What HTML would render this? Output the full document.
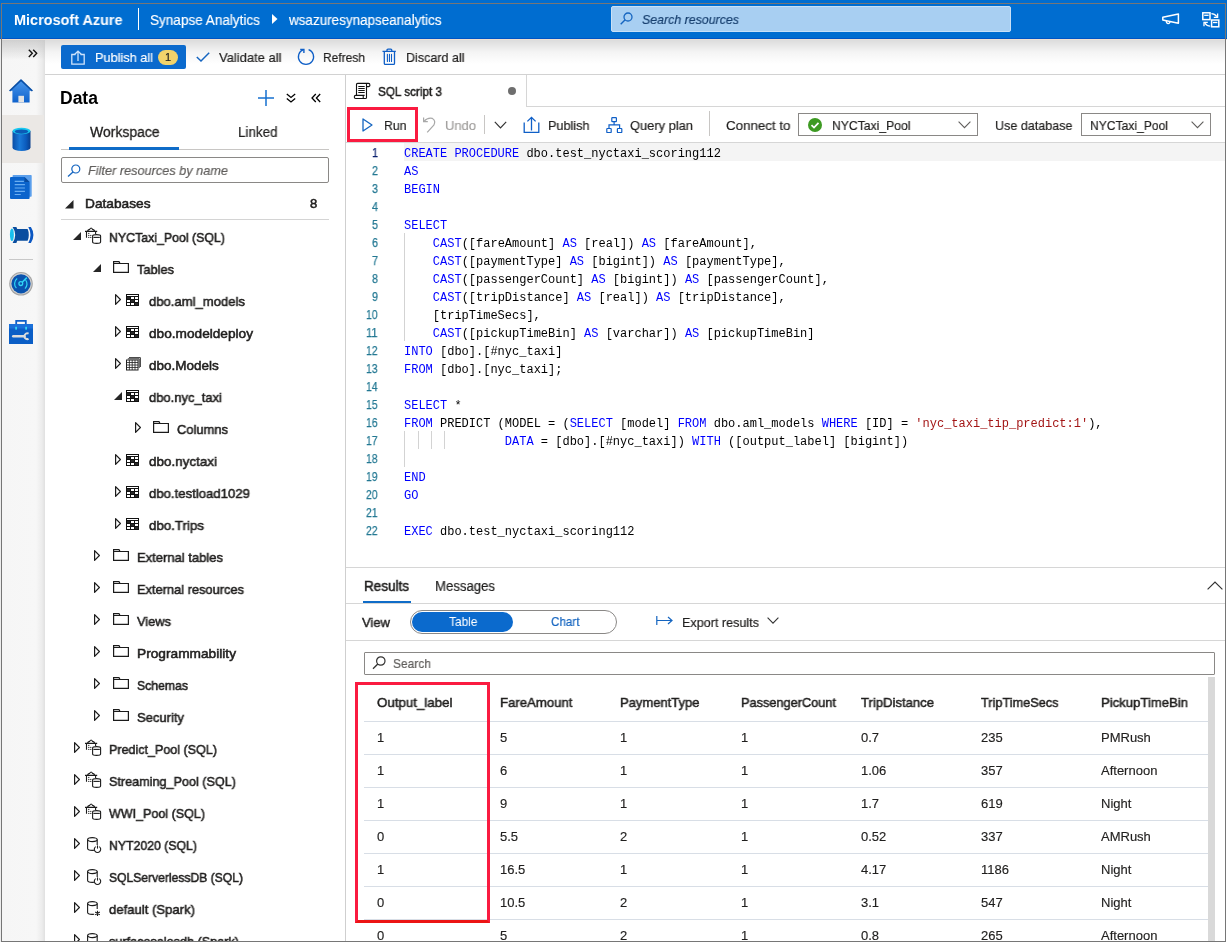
<!DOCTYPE html>
<html><head><meta charset="utf-8">
<style>
*{box-sizing:border-box;margin:0;padding:0}
html,body{width:1227px;height:942px;overflow:hidden;background:#fff}
body{position:relative;font-family:"Liberation Sans",sans-serif;color:#201f1e;font-size:13px}
.a{position:absolute;white-space:pre}
svg.a{overflow:visible}
body{-webkit-font-smoothing:antialiased}
div.a{will-change:transform}
</style></head><body>

<div class="a" style="left:0px;top:0px;width:1227px;height:39px;background:#006dd0"></div>
<div class="a" style="left:0px;top:38px;width:1227px;height:1px;background:#0054c4"></div>
<div class="a" style="left:0px;top:39px;width:1227px;height:1px;background:#f0e0d0;z-index:3"></div>
<div class="a" style="left:138px;top:8px;width:1px;height:22px;background:#fff"></div>
<svg class="a" style="left:272px;top:14px;z-index:6" width="6" height="10" viewBox="0 0 6 10"><path d="M0 0L5.5 5L0 10Z" fill="#fff"/></svg>
<div class="a" style="left:611px;top:6px;width:400px;height:26px;background:#a8cff2;border-radius:2px;border:1px solid #c9e0f6"></div>
<svg class="a" style="left:620px;top:12px;z-index:6" width="13" height="13" viewBox="0 0 13 13"><circle cx="8" cy="5" r="4" fill="none" stroke="#1565c0" stroke-width="1.3"/><path d="M5.2 7.8L0.7 12.3" stroke="#1565c0" stroke-width="1.4"/></svg>
<svg class="a" style="left:1162px;top:13px;z-index:6" width="18" height="12" viewBox="0 0 18 12"><path d="M0.8 4.2L16.4 0.9V10.3L0.8 7.1Z" fill="none" stroke="#fff" stroke-width="1.5" stroke-linejoin="round"/><path d="M4.3 7.8Q4.3 10.6 6.1 10.6Q7.9 10.6 7.9 8.6" fill="none" stroke="#fff" stroke-width="1.3"/></svg>
<svg class="a" style="left:1202px;top:11.5px;z-index:6" width="18" height="16" viewBox="0 0 18 16"><rect x="0.8" y="0.8" width="7.2" height="6.8" fill="none" stroke="#fff" stroke-width="1.5"/><path d="M2.2 3.3H6.6" stroke="#fff" stroke-width="1.3"/><rect x="9.6" y="8" width="7.2" height="6.8" fill="none" stroke="#fff" stroke-width="1.5"/><path d="M11 10.5H15.4" stroke="#fff" stroke-width="1.3"/><path d="M9.4 1.6Q12.6 1.6 14.8 4.6" fill="none" stroke="#fff" stroke-width="1.3"/><path d="M15.6 1.6V5.4H11.8" fill="none" stroke="#fff" stroke-width="1.3"/><path d="M8.2 14.2Q5 14.2 2.8 11.2" fill="none" stroke="#fff" stroke-width="1.3"/><path d="M2 14.2V10.4H5.8" fill="none" stroke="#fff" stroke-width="1.3"/></svg>
<div class="a" style="left:2px;top:40px;width:43px;height:902px;background:linear-gradient(to right,#f6f6f6 0,#f7f7f7 34px,#ececec 40px,#e0e0e0 43px)"></div>
<div class="a" style="left:2px;top:115px;width:42px;height:48px;background:#ebe8e5"></div>
<div class="a" style="left:2px;top:40px;width:43px;height:20px;background:linear-gradient(rgba(198,198,198,0.8),rgba(245,245,245,0))"></div>
<svg class="a" style="left:28px;top:48.5px;z-index:6" width="10" height="9" viewBox="0 0 10 9"><path d="M0.8 0.7L4.3 4.3L0.8 7.9M5.2 0.7L8.7 4.3L5.2 7.9" fill="none" stroke="#111" stroke-width="1.4"/></svg>
<svg class="a" style="left:9px;top:79px;z-index:6" width="24" height="24" viewBox="0 0 24 24"><defs><linearGradient id="hg" x1="0" y1="0" x2="0" y2="1"><stop offset="0" stop-color="#4b98ec"/><stop offset="1" stop-color="#0f62cc"/></linearGradient></defs><path d="M12 1L23.5 11.8H20.6V23.4H3.4V11.8H0.5Z" fill="url(#hg)"/><path d="M0.6 12L12 1.2L23.4 12" fill="none" stroke="#0a4fa6" stroke-width="1.7" stroke-linejoin="round"/><rect x="9.4" y="16.8" width="5.6" height="6.6" fill="#e3e3e3"/></svg>
<svg class="a" style="left:11.5px;top:127px;z-index:6" width="19" height="25" viewBox="0 0 19 25"><defs><linearGradient id="cg" x1="0" y1="0" x2="1" y2="0"><stop offset="0" stop-color="#0a4ea6"/><stop offset="0.4" stop-color="#1a7ad9"/><stop offset="0.75" stop-color="#0b5bbd"/><stop offset="1" stop-color="#093f8e"/></linearGradient></defs><path d="M0.5 4V20.5A9 3.6 0 0 0 18.5 20.5V4Z" fill="url(#cg)"/><ellipse cx="9.5" cy="4" rx="9" ry="3.3" fill="#18c8f0"/><ellipse cx="9.5" cy="4.6" rx="6.8" ry="2.1" fill="#0b5ab6"/></svg>
<svg class="a" style="left:10px;top:175px;z-index:6" width="22" height="24" viewBox="0 0 22 24"><rect x="2.6" y="0" width="19.1" height="21.8" rx="0.8" fill="#5b9fec"/><path d="M0 3.1Q0 2.1 1 2.1H14.5L19.6 7V23Q19.6 24 18.6 24H1Q0 24 0 23Z" fill="#0b64cc"/><path d="M14.5 2.1V7H19.6Z" fill="#0a4c9e"/><path d="M4.7 6.4H13.9M4.7 9.6H14.9M4.7 13H14.9M4.7 16.4H14.9M4.7 19.5H10.8" stroke="#6aaef2" stroke-width="1.2"/></svg>
<svg class="a" style="left:9px;top:226px;z-index:6" width="25" height="18" viewBox="0 0 25 18"><ellipse cx="2.9" cy="8.8" rx="2" ry="6.3" fill="#17c0ee"/><path d="M3.6 0.9H7.4L8.2 3H18.6Q19.8 5.5 19.8 8.9Q19.8 12.3 18.6 14.8H8.2L7.4 16.9H3.6Q6.2 13 6.2 8.9Q6.2 4.8 3.6 0.9Z" fill="#0a4e9f"/><path d="M19.3 0.9H21.9Q24.4 4.6 24.4 8.9Q24.4 13.2 21.9 16.9H19.3Q21.5 13 21.5 8.9Q21.5 4.8 19.3 0.9Z" fill="#0b57c2"/></svg>
<div class="a" style="left:9px;top:259px;width:24px;height:1px;background:#c8c8c8"></div>
<svg class="a" style="left:9px;top:272px;z-index:6" width="24" height="24" viewBox="0 0 24 24"><circle cx="12" cy="11.8" r="11.8" fill="#a3a3a3"/><circle cx="12" cy="11.8" r="10.7" fill="#cfcfcf"/><circle cx="12" cy="11.8" r="9.6" fill="#0a53ae"/><path d="M7.4 16.2A6.4 6.4 0 0 1 8.2 6.6" fill="none" stroke="#2fd6f5" stroke-width="1.2"/><path d="M16.6 8A6.4 6.4 0 0 1 16 16.6" fill="none" stroke="#2fd6f5" stroke-width="1.2"/><circle cx="11.8" cy="11.6" r="1.9" fill="none" stroke="#2fd6f5" stroke-width="1.3"/><path d="M13.2 10.2L17.8 5.6" stroke="#2fd6f5" stroke-width="1.5"/></svg>
<svg class="a" style="left:9px;top:319px;z-index:6" width="24" height="25" viewBox="0 0 24 25"><path d="M7.2 5V1.8H16.8V5" fill="none" stroke="#0e5fc8" stroke-width="1.8"/><rect x="0" y="5" width="24" height="20" fill="#0b5ec6"/><rect x="0" y="5" width="24" height="4.5" fill="#1a70d9"/><rect x="6.2" y="7.8" width="1.8" height="2.8" fill="#35d4f3"/><rect x="16.2" y="7.8" width="1.8" height="2.8" fill="#35d4f3"/><path d="M4.2 17.2H15.5" stroke="#dcdcdc" stroke-width="2.4" stroke-linecap="round"/><path d="M19.6 14.6A2.9 2.9 0 1 0 19.6 19.8" fill="none" stroke="#dcdcdc" stroke-width="2"/></svg>
<div class="a" style="left:45px;top:40px;width:1180px;height:35px;background:linear-gradient(#dcdcdc 0,#f4f4f4 12px,#fff 24px)"></div>
<div class="a" style="left:45px;top:74px;width:1180px;height:1px;background:#d2d2d2"></div>
<div class="a" style="left:61px;top:45px;width:125px;height:24px;background:#0b6acd;border-radius:2px"></div>
<svg class="a" style="left:71px;top:50px;z-index:6" width="14" height="15" viewBox="0 0 14 15"><path d="M4.5 4.5H0.8V14.2H13.2V4.5H9.5" fill="none" stroke="#cfe3fb" stroke-width="1.3"/><path d="M7 11V1.2M3.8 4.3L7 1.1L10.2 4.3" fill="none" stroke="#cfe3fb" stroke-width="1.3"/></svg>
<div class="a" style="left:158px;top:50px;width:19.5px;height:15px;border-radius:8px;background:#f2d36b"></div>
<svg class="a" style="left:196px;top:52px;z-index:6" width="14" height="10" viewBox="0 0 14 10"><path d="M0.8 5L5 9L13.2 0.8" fill="none" stroke="#1565c0" stroke-width="1.5"/></svg>
<svg class="a" style="left:297px;top:48px;z-index:6" width="18" height="18" viewBox="0 0 18 18"><path d="M11.6 1.7A7.6 7.6 0 1 1 6.4 1.7" fill="none" stroke="#0f5fc7" stroke-width="1.3"/><path d="M3.2 1.4H6.9V5.1" fill="none" stroke="#0f5fc7" stroke-width="1.4"/></svg>
<svg class="a" style="left:382px;top:48px;z-index:6" width="15" height="18" viewBox="0 0 15 18"><path d="M0.5 3.4H13.8M5 3.4V2.3Q5 1.2 6 1.2H8.8Q9.8 1.2 9.8 2.3V3.4M2.3 3.8V15.4Q2.3 16.4 3.3 16.4H11.5Q12.5 16.4 12.5 15.4V3.8" fill="none" stroke="#0f5fc7" stroke-width="1.3"/><path d="M5.4 6.4V13.5M7.45 6.4V13.5M9.5 6.4V13.5" stroke="#0f5fc7" stroke-width="1.1" stroke-linecap="round"/></svg>
<div class="a" style="left:345px;top:75px;width:1px;height:867px;background:#cfcfcf"></div>
<svg class="a" style="left:258px;top:90px;z-index:6" width="16" height="16" viewBox="0 0 16 16"><path d="M8 0V16M0 8H16" stroke="#1670d0" stroke-width="1.5"/></svg>
<svg class="a" style="left:286px;top:93px;z-index:6" width="10" height="10" viewBox="0 0 10 10"><path d="M0.8 1L5 4.5L9.2 1M0.8 5.5L5 9L9.2 5.5" fill="none" stroke="#000" stroke-width="1.3"/></svg>
<svg class="a" style="left:311px;top:93px;z-index:6" width="10" height="10" viewBox="0 0 10 10"><path d="M4.8 1L1 5L4.8 9M9.2 1L5.4 5L9.2 9" fill="none" stroke="#000" stroke-width="1.3"/></svg>
<div class="a" style="left:61px;top:149px;width:268px;height:1px;background:#c8c6c4"></div>
<div class="a" style="left:69px;top:147px;width:110px;height:2.5px;background:#0f6cc8"></div>
<div class="a" style="left:61px;top:157px;width:268px;height:26px;border:1px solid #8a8886;border-radius:2px;background:#fff"></div>
<svg class="a" style="left:67px;top:164px;z-index:6" width="14" height="13" viewBox="0 0 14 13"><circle cx="8.8" cy="5" r="4" fill="none" stroke="#1565c0" stroke-width="1.2"/><path d="M6 8L1 12.5" stroke="#1565c0" stroke-width="1.3"/></svg>
<svg class="a" style="left:65px;top:200px;z-index:6" width="8.5" height="8.5" viewBox="0 0 8.5 8.5"><path d="M8.5 0V8.5H0Z" fill="#262626"/></svg>
<div class="a" style="left:61px;top:219px;width:268px;height:1px;background:#d4d4d4"></div>
<svg class="a" style="left:73px;top:232px;z-index:6" width="8" height="8" viewBox="0 0 8 8"><path d="M8 0V8H0Z" fill="#262626"/></svg>
<svg class="a" style="left:85px;top:227px;z-index:6" width="16" height="17" viewBox="0 0 16 17"><path d="M0 4.4H12.2M2.2 4.4Q3 2.6 4.6 2.4Q5.6 1 6.1 1Q6.6 1 7.6 2.4Q9.2 2.6 10 4.4" fill="none" stroke="#1b1b1b" stroke-width="1.1"/><path d="M1.5 4.4V10.8M10.6 4.4V7" stroke="#1b1b1b" stroke-width="1.1"/><circle cx="3.8" cy="6.4" r="0.6" fill="#1b1b1b"/><circle cx="3.8" cy="8.4" r="0.6" fill="#1b1b1b"/><circle cx="5.8" cy="8.4" r="0.6" fill="#1b1b1b"/><circle cx="3.8" cy="10.4" r="0.6" fill="#1b1b1b"/><circle cx="5.8" cy="10.4" r="0.6" fill="#1b1b1b"/><path d="M7.6 9Q7.6 7.6 11.6 7.6Q15.6 7.6 15.6 9V15Q15.6 16.4 11.6 16.4Q7.6 16.4 7.6 15Z" fill="#fff" stroke="#1b1b1b" stroke-width="1.1"/><path d="M8.4 10.4H14.8" stroke="#1b1b1b" stroke-width="1.1"/></svg>
<svg class="a" style="left:93px;top:264px;z-index:6" width="8" height="8" viewBox="0 0 8 8"><path d="M8 0V8H0Z" fill="#262626"/></svg>
<svg class="a" style="left:113px;top:261px;z-index:6" width="16" height="12" viewBox="0 0 16 12"><path d="M0.6 11.4V0.6H6L7 2.5H15.4V11.4Z M0.6 2.5H7" fill="none" stroke="#1b1b1b" stroke-width="1.2"/></svg>
<svg class="a" style="left:114.8px;top:294px;z-index:6" width="6" height="12" viewBox="0 0 6 12"><path d="M0.6 0.7L5.4 5.5L0.6 10.3Z" fill="none" stroke="#1b1b1b" stroke-width="1.2" stroke-linejoin="round"/></svg>
<svg class="a" style="left:126px;top:294px;z-index:6" width="13" height="12" viewBox="0 0 13 12" shape-rendering="crispEdges"><rect x="0" y="0" width="13" height="12" fill="#111"/><rect x="1" y="1" width="11" height="1" fill="#fff"/><rect x="1" y="3" width="3" height="2" fill="#2a2a2a"/><rect x="5" y="3" width="3" height="2" fill="#fff" rx="0.4"/><rect x="9" y="3" width="3" height="2" fill="#fff" rx="0.4"/><rect x="1" y="6" width="3" height="2" fill="#fff" rx="0.4"/><rect x="5" y="6" width="3" height="2" fill="#2a2a2a"/><rect x="9" y="6" width="3" height="2" fill="#fff" rx="0.4"/><rect x="1" y="9" width="3" height="2" fill="#fff" rx="0.4"/><rect x="5" y="9" width="3" height="2" fill="#fff" rx="0.4"/><rect x="9" y="9" width="3" height="2" fill="#2a2a2a"/></svg>
<svg class="a" style="left:114.8px;top:326px;z-index:6" width="6" height="12" viewBox="0 0 6 12"><path d="M0.6 0.7L5.4 5.5L0.6 10.3Z" fill="none" stroke="#1b1b1b" stroke-width="1.2" stroke-linejoin="round"/></svg>
<svg class="a" style="left:126px;top:326px;z-index:6" width="13" height="12" viewBox="0 0 13 12" shape-rendering="crispEdges"><rect x="0" y="0" width="13" height="12" fill="#111"/><rect x="1" y="1" width="11" height="1" fill="#fff"/><rect x="1" y="3" width="3" height="2" fill="#2a2a2a"/><rect x="5" y="3" width="3" height="2" fill="#fff" rx="0.4"/><rect x="9" y="3" width="3" height="2" fill="#fff" rx="0.4"/><rect x="1" y="6" width="3" height="2" fill="#fff" rx="0.4"/><rect x="5" y="6" width="3" height="2" fill="#2a2a2a"/><rect x="9" y="6" width="3" height="2" fill="#fff" rx="0.4"/><rect x="1" y="9" width="3" height="2" fill="#fff" rx="0.4"/><rect x="5" y="9" width="3" height="2" fill="#fff" rx="0.4"/><rect x="9" y="9" width="3" height="2" fill="#2a2a2a"/></svg>
<svg class="a" style="left:114.8px;top:358px;z-index:6" width="6" height="12" viewBox="0 0 6 12"><path d="M0.6 0.7L5.4 5.5L0.6 10.3Z" fill="none" stroke="#1b1b1b" stroke-width="1.2" stroke-linejoin="round"/></svg>
<svg class="a" style="left:126px;top:357px;z-index:6" width="15" height="14" viewBox="0 0 15 14"><path d="M3 0.6H14.4V10M1.8 1.8H13.2V11" fill="none" stroke="#222" stroke-width="0.9"/><rect x="0.5" y="3" width="11.5" height="10" fill="#fff" stroke="#222" stroke-width="1"/><path d="M0.5 5.5H12M0.5 8H12M0.5 10.5H12M3.4 3V13M6.2 3V13M9 3V13" stroke="#222" stroke-width="0.8"/></svg>
<svg class="a" style="left:114px;top:392px;z-index:6" width="8" height="8" viewBox="0 0 8 8"><path d="M8 0V8H0Z" fill="#262626"/></svg>
<svg class="a" style="left:126px;top:390px;z-index:6" width="13" height="12" viewBox="0 0 13 12" shape-rendering="crispEdges"><rect x="0" y="0" width="13" height="12" fill="#111"/><rect x="1" y="1" width="11" height="1" fill="#fff"/><rect x="1" y="3" width="3" height="2" fill="#2a2a2a"/><rect x="5" y="3" width="3" height="2" fill="#fff" rx="0.4"/><rect x="9" y="3" width="3" height="2" fill="#fff" rx="0.4"/><rect x="1" y="6" width="3" height="2" fill="#fff" rx="0.4"/><rect x="5" y="6" width="3" height="2" fill="#2a2a2a"/><rect x="9" y="6" width="3" height="2" fill="#fff" rx="0.4"/><rect x="1" y="9" width="3" height="2" fill="#fff" rx="0.4"/><rect x="5" y="9" width="3" height="2" fill="#fff" rx="0.4"/><rect x="9" y="9" width="3" height="2" fill="#2a2a2a"/></svg>
<svg class="a" style="left:134.8px;top:422px;z-index:6" width="6" height="12" viewBox="0 0 6 12"><path d="M0.6 0.7L5.4 5.5L0.6 10.3Z" fill="none" stroke="#1b1b1b" stroke-width="1.2" stroke-linejoin="round"/></svg>
<svg class="a" style="left:153px;top:421px;z-index:6" width="16" height="12" viewBox="0 0 16 12"><path d="M0.6 11.4V0.6H6L7 2.5H15.4V11.4Z M0.6 2.5H7" fill="none" stroke="#1b1b1b" stroke-width="1.2"/></svg>
<svg class="a" style="left:114.8px;top:454px;z-index:6" width="6" height="12" viewBox="0 0 6 12"><path d="M0.6 0.7L5.4 5.5L0.6 10.3Z" fill="none" stroke="#1b1b1b" stroke-width="1.2" stroke-linejoin="round"/></svg>
<svg class="a" style="left:126px;top:454px;z-index:6" width="13" height="12" viewBox="0 0 13 12" shape-rendering="crispEdges"><rect x="0" y="0" width="13" height="12" fill="#111"/><rect x="1" y="1" width="11" height="1" fill="#fff"/><rect x="1" y="3" width="3" height="2" fill="#2a2a2a"/><rect x="5" y="3" width="3" height="2" fill="#fff" rx="0.4"/><rect x="9" y="3" width="3" height="2" fill="#fff" rx="0.4"/><rect x="1" y="6" width="3" height="2" fill="#fff" rx="0.4"/><rect x="5" y="6" width="3" height="2" fill="#2a2a2a"/><rect x="9" y="6" width="3" height="2" fill="#fff" rx="0.4"/><rect x="1" y="9" width="3" height="2" fill="#fff" rx="0.4"/><rect x="5" y="9" width="3" height="2" fill="#fff" rx="0.4"/><rect x="9" y="9" width="3" height="2" fill="#2a2a2a"/></svg>
<svg class="a" style="left:114.8px;top:486px;z-index:6" width="6" height="12" viewBox="0 0 6 12"><path d="M0.6 0.7L5.4 5.5L0.6 10.3Z" fill="none" stroke="#1b1b1b" stroke-width="1.2" stroke-linejoin="round"/></svg>
<svg class="a" style="left:126px;top:486px;z-index:6" width="13" height="12" viewBox="0 0 13 12" shape-rendering="crispEdges"><rect x="0" y="0" width="13" height="12" fill="#111"/><rect x="1" y="1" width="11" height="1" fill="#fff"/><rect x="1" y="3" width="3" height="2" fill="#2a2a2a"/><rect x="5" y="3" width="3" height="2" fill="#fff" rx="0.4"/><rect x="9" y="3" width="3" height="2" fill="#fff" rx="0.4"/><rect x="1" y="6" width="3" height="2" fill="#fff" rx="0.4"/><rect x="5" y="6" width="3" height="2" fill="#2a2a2a"/><rect x="9" y="6" width="3" height="2" fill="#fff" rx="0.4"/><rect x="1" y="9" width="3" height="2" fill="#fff" rx="0.4"/><rect x="5" y="9" width="3" height="2" fill="#fff" rx="0.4"/><rect x="9" y="9" width="3" height="2" fill="#2a2a2a"/></svg>
<svg class="a" style="left:114.8px;top:518px;z-index:6" width="6" height="12" viewBox="0 0 6 12"><path d="M0.6 0.7L5.4 5.5L0.6 10.3Z" fill="none" stroke="#1b1b1b" stroke-width="1.2" stroke-linejoin="round"/></svg>
<svg class="a" style="left:126px;top:518px;z-index:6" width="13" height="12" viewBox="0 0 13 12" shape-rendering="crispEdges"><rect x="0" y="0" width="13" height="12" fill="#111"/><rect x="1" y="1" width="11" height="1" fill="#fff"/><rect x="1" y="3" width="3" height="2" fill="#2a2a2a"/><rect x="5" y="3" width="3" height="2" fill="#fff" rx="0.4"/><rect x="9" y="3" width="3" height="2" fill="#fff" rx="0.4"/><rect x="1" y="6" width="3" height="2" fill="#fff" rx="0.4"/><rect x="5" y="6" width="3" height="2" fill="#2a2a2a"/><rect x="9" y="6" width="3" height="2" fill="#fff" rx="0.4"/><rect x="1" y="9" width="3" height="2" fill="#fff" rx="0.4"/><rect x="5" y="9" width="3" height="2" fill="#fff" rx="0.4"/><rect x="9" y="9" width="3" height="2" fill="#2a2a2a"/></svg>
<svg class="a" style="left:93.8px;top:550px;z-index:6" width="6" height="12" viewBox="0 0 6 12"><path d="M0.6 0.7L5.4 5.5L0.6 10.3Z" fill="none" stroke="#1b1b1b" stroke-width="1.2" stroke-linejoin="round"/></svg>
<svg class="a" style="left:113px;top:549px;z-index:6" width="16" height="12" viewBox="0 0 16 12"><path d="M0.6 11.4V0.6H6L7 2.5H15.4V11.4Z M0.6 2.5H7" fill="none" stroke="#1b1b1b" stroke-width="1.2"/></svg>
<svg class="a" style="left:93.8px;top:582px;z-index:6" width="6" height="12" viewBox="0 0 6 12"><path d="M0.6 0.7L5.4 5.5L0.6 10.3Z" fill="none" stroke="#1b1b1b" stroke-width="1.2" stroke-linejoin="round"/></svg>
<svg class="a" style="left:113px;top:581px;z-index:6" width="16" height="12" viewBox="0 0 16 12"><path d="M0.6 11.4V0.6H6L7 2.5H15.4V11.4Z M0.6 2.5H7" fill="none" stroke="#1b1b1b" stroke-width="1.2"/></svg>
<svg class="a" style="left:93.8px;top:614px;z-index:6" width="6" height="12" viewBox="0 0 6 12"><path d="M0.6 0.7L5.4 5.5L0.6 10.3Z" fill="none" stroke="#1b1b1b" stroke-width="1.2" stroke-linejoin="round"/></svg>
<svg class="a" style="left:113px;top:613px;z-index:6" width="16" height="12" viewBox="0 0 16 12"><path d="M0.6 11.4V0.6H6L7 2.5H15.4V11.4Z M0.6 2.5H7" fill="none" stroke="#1b1b1b" stroke-width="1.2"/></svg>
<svg class="a" style="left:93.8px;top:646px;z-index:6" width="6" height="12" viewBox="0 0 6 12"><path d="M0.6 0.7L5.4 5.5L0.6 10.3Z" fill="none" stroke="#1b1b1b" stroke-width="1.2" stroke-linejoin="round"/></svg>
<svg class="a" style="left:113px;top:645px;z-index:6" width="16" height="12" viewBox="0 0 16 12"><path d="M0.6 11.4V0.6H6L7 2.5H15.4V11.4Z M0.6 2.5H7" fill="none" stroke="#1b1b1b" stroke-width="1.2"/></svg>
<svg class="a" style="left:93.8px;top:678px;z-index:6" width="6" height="12" viewBox="0 0 6 12"><path d="M0.6 0.7L5.4 5.5L0.6 10.3Z" fill="none" stroke="#1b1b1b" stroke-width="1.2" stroke-linejoin="round"/></svg>
<svg class="a" style="left:113px;top:677px;z-index:6" width="16" height="12" viewBox="0 0 16 12"><path d="M0.6 11.4V0.6H6L7 2.5H15.4V11.4Z M0.6 2.5H7" fill="none" stroke="#1b1b1b" stroke-width="1.2"/></svg>
<svg class="a" style="left:93.8px;top:710px;z-index:6" width="6" height="12" viewBox="0 0 6 12"><path d="M0.6 0.7L5.4 5.5L0.6 10.3Z" fill="none" stroke="#1b1b1b" stroke-width="1.2" stroke-linejoin="round"/></svg>
<svg class="a" style="left:113px;top:709px;z-index:6" width="16" height="12" viewBox="0 0 16 12"><path d="M0.6 11.4V0.6H6L7 2.5H15.4V11.4Z M0.6 2.5H7" fill="none" stroke="#1b1b1b" stroke-width="1.2"/></svg>
<svg class="a" style="left:73.8px;top:742px;z-index:6" width="6" height="12" viewBox="0 0 6 12"><path d="M0.6 0.7L5.4 5.5L0.6 10.3Z" fill="none" stroke="#1b1b1b" stroke-width="1.2" stroke-linejoin="round"/></svg>
<svg class="a" style="left:85px;top:739px;z-index:6" width="16" height="17" viewBox="0 0 16 17"><path d="M0 4.4H12.2M2.2 4.4Q3 2.6 4.6 2.4Q5.6 1 6.1 1Q6.6 1 7.6 2.4Q9.2 2.6 10 4.4" fill="none" stroke="#1b1b1b" stroke-width="1.1"/><path d="M1.5 4.4V10.8M10.6 4.4V7" stroke="#1b1b1b" stroke-width="1.1"/><circle cx="3.8" cy="6.4" r="0.6" fill="#1b1b1b"/><circle cx="3.8" cy="8.4" r="0.6" fill="#1b1b1b"/><circle cx="5.8" cy="8.4" r="0.6" fill="#1b1b1b"/><circle cx="3.8" cy="10.4" r="0.6" fill="#1b1b1b"/><circle cx="5.8" cy="10.4" r="0.6" fill="#1b1b1b"/><path d="M7.6 9Q7.6 7.6 11.6 7.6Q15.6 7.6 15.6 9V15Q15.6 16.4 11.6 16.4Q7.6 16.4 7.6 15Z" fill="#fff" stroke="#1b1b1b" stroke-width="1.1"/><path d="M8.4 10.4H14.8" stroke="#1b1b1b" stroke-width="1.1"/></svg>
<svg class="a" style="left:73.8px;top:774px;z-index:6" width="6" height="12" viewBox="0 0 6 12"><path d="M0.6 0.7L5.4 5.5L0.6 10.3Z" fill="none" stroke="#1b1b1b" stroke-width="1.2" stroke-linejoin="round"/></svg>
<svg class="a" style="left:85px;top:771px;z-index:6" width="16" height="17" viewBox="0 0 16 17"><path d="M0 4.4H12.2M2.2 4.4Q3 2.6 4.6 2.4Q5.6 1 6.1 1Q6.6 1 7.6 2.4Q9.2 2.6 10 4.4" fill="none" stroke="#1b1b1b" stroke-width="1.1"/><path d="M1.5 4.4V10.8M10.6 4.4V7" stroke="#1b1b1b" stroke-width="1.1"/><circle cx="3.8" cy="6.4" r="0.6" fill="#1b1b1b"/><circle cx="3.8" cy="8.4" r="0.6" fill="#1b1b1b"/><circle cx="5.8" cy="8.4" r="0.6" fill="#1b1b1b"/><circle cx="3.8" cy="10.4" r="0.6" fill="#1b1b1b"/><circle cx="5.8" cy="10.4" r="0.6" fill="#1b1b1b"/><path d="M7.6 9Q7.6 7.6 11.6 7.6Q15.6 7.6 15.6 9V15Q15.6 16.4 11.6 16.4Q7.6 16.4 7.6 15Z" fill="#fff" stroke="#1b1b1b" stroke-width="1.1"/><path d="M8.4 10.4H14.8" stroke="#1b1b1b" stroke-width="1.1"/></svg>
<svg class="a" style="left:73.8px;top:806px;z-index:6" width="6" height="12" viewBox="0 0 6 12"><path d="M0.6 0.7L5.4 5.5L0.6 10.3Z" fill="none" stroke="#1b1b1b" stroke-width="1.2" stroke-linejoin="round"/></svg>
<svg class="a" style="left:85px;top:803px;z-index:6" width="16" height="17" viewBox="0 0 16 17"><path d="M0 4.4H12.2M2.2 4.4Q3 2.6 4.6 2.4Q5.6 1 6.1 1Q6.6 1 7.6 2.4Q9.2 2.6 10 4.4" fill="none" stroke="#1b1b1b" stroke-width="1.1"/><path d="M1.5 4.4V10.8M10.6 4.4V7" stroke="#1b1b1b" stroke-width="1.1"/><circle cx="3.8" cy="6.4" r="0.6" fill="#1b1b1b"/><circle cx="3.8" cy="8.4" r="0.6" fill="#1b1b1b"/><circle cx="5.8" cy="8.4" r="0.6" fill="#1b1b1b"/><circle cx="3.8" cy="10.4" r="0.6" fill="#1b1b1b"/><circle cx="5.8" cy="10.4" r="0.6" fill="#1b1b1b"/><path d="M7.6 9Q7.6 7.6 11.6 7.6Q15.6 7.6 15.6 9V15Q15.6 16.4 11.6 16.4Q7.6 16.4 7.6 15Z" fill="#fff" stroke="#1b1b1b" stroke-width="1.1"/><path d="M8.4 10.4H14.8" stroke="#1b1b1b" stroke-width="1.1"/></svg>
<svg class="a" style="left:73.8px;top:838px;z-index:6" width="6" height="12" viewBox="0 0 6 12"><path d="M0.6 0.7L5.4 5.5L0.6 10.3Z" fill="none" stroke="#1b1b1b" stroke-width="1.2" stroke-linejoin="round"/></svg>
<svg class="a" style="left:87px;top:837px;z-index:6" width="14" height="16" viewBox="0 0 14 16"><path d="M0.6 2.6V11.6Q0.6 13.4 5.4 13.4Q6.4 13.4 7.2 13.3M10.2 8V2.6" fill="none" stroke="#1b1b1b" stroke-width="1.1"/><ellipse cx="5.4" cy="2.6" rx="4.8" ry="2" fill="none" stroke="#1b1b1b" stroke-width="1.1"/><path d="M8.7 9.6A3.2 3.2 0 1 0 12.3 9.6" fill="none" stroke="#1b1b1b" stroke-width="1.1"/><path d="M10.5 8.4V11.6" stroke="#1b1b1b" stroke-width="1.1"/></svg>
<svg class="a" style="left:73.8px;top:870px;z-index:6" width="6" height="12" viewBox="0 0 6 12"><path d="M0.6 0.7L5.4 5.5L0.6 10.3Z" fill="none" stroke="#1b1b1b" stroke-width="1.2" stroke-linejoin="round"/></svg>
<svg class="a" style="left:87px;top:869px;z-index:6" width="14" height="16" viewBox="0 0 14 16"><path d="M0.6 2.6V11.6Q0.6 13.4 5.4 13.4Q6.4 13.4 7.2 13.3M10.2 8V2.6" fill="none" stroke="#1b1b1b" stroke-width="1.1"/><ellipse cx="5.4" cy="2.6" rx="4.8" ry="2" fill="none" stroke="#1b1b1b" stroke-width="1.1"/><path d="M8.7 9.6A3.2 3.2 0 1 0 12.3 9.6" fill="none" stroke="#1b1b1b" stroke-width="1.1"/><path d="M10.5 8.4V11.6" stroke="#1b1b1b" stroke-width="1.1"/></svg>
<svg class="a" style="left:73.8px;top:902px;z-index:6" width="6" height="12" viewBox="0 0 6 12"><path d="M0.6 0.7L5.4 5.5L0.6 10.3Z" fill="none" stroke="#1b1b1b" stroke-width="1.2" stroke-linejoin="round"/></svg>
<svg class="a" style="left:87px;top:901px;z-index:6" width="14" height="16" viewBox="0 0 14 16"><path d="M0.6 2.6V11.6Q0.6 13.4 5.4 13.4Q6.4 13.4 7.2 13.3M10.2 8V2.6" fill="none" stroke="#1b1b1b" stroke-width="1.1"/><ellipse cx="5.4" cy="2.6" rx="4.8" ry="2" fill="none" stroke="#1b1b1b" stroke-width="1.1"/><path d="M10.5 9.7V15M8.2 11L12.8 13.7M12.8 11L8.2 13.7" stroke="#1b1b1b" stroke-width="1.1"/></svg>
<svg class="a" style="left:73.8px;top:934px;z-index:6" width="6" height="12" viewBox="0 0 6 12"><path d="M0.6 0.7L5.4 5.5L0.6 10.3Z" fill="none" stroke="#1b1b1b" stroke-width="1.2" stroke-linejoin="round"/></svg>
<svg class="a" style="left:87px;top:933px;z-index:6" width="14" height="16" viewBox="0 0 14 16"><path d="M0.6 2.6V11.6Q0.6 13.4 5.4 13.4Q6.4 13.4 7.2 13.3M10.2 8V2.6" fill="none" stroke="#1b1b1b" stroke-width="1.1"/><ellipse cx="5.4" cy="2.6" rx="4.8" ry="2" fill="none" stroke="#1b1b1b" stroke-width="1.1"/><path d="M8.7 9.6A3.2 3.2 0 1 0 12.3 9.6" fill="none" stroke="#1b1b1b" stroke-width="1.1"/><path d="M10.5 8.4V11.6" stroke="#1b1b1b" stroke-width="1.1"/></svg>
<div class="a" style="left:346px;top:75px;width:879px;height:31px;background:#fff"></div>
<div class="a" style="left:526px;top:75px;width:1px;height:31px;background:#d6d6d6"></div>
<div class="a" style="left:526px;top:106px;width:699px;height:1px;background:#d6d6d6"></div>
<svg class="a" style="left:353px;top:82px;z-index:6" width="19" height="18" viewBox="0 0 19 18"><path d="M3.5 13.4V2.6Q3.5 1.4 4.7 1.4H15.5Q16.9 1.4 16.9 3Q16.9 4.6 15.5 4.6H13.5M13.5 1.4V15.4Q13.5 16.5 12.4 16.5H2.7Q1.3 16.5 1.3 15Q1.3 13.4 2.7 13.4H11.6M10.5 13.4Q9.7 15 10.5 16.5M5.3 4.5H11.7M5.3 6.5H11.7M5.3 8.5H11.7M5.3 10.5H11.7" fill="none" stroke="#111" stroke-width="1.1"/></svg>
<div class="a" style="left:508px;top:87px;width:8px;height:8px;border-radius:4px;background:#6e6e6e"></div>
<div class="a" style="left:346px;top:142px;width:879px;height:1px;background:#d6d6d6"></div>
<div class="a" style="left:347px;top:107px;width:71px;height:35px;border:3px solid #fa1b40"></div>
<svg class="a" style="left:362px;top:118px;z-index:6" width="11" height="14" viewBox="0 0 11 14"><path d="M1 1L10 7L1 13Z" fill="none" stroke="#1565c0" stroke-width="1.3" stroke-linejoin="round"/></svg>
<svg class="a" style="left:422px;top:116px;z-index:6" width="15" height="17" viewBox="0 0 15 17"><path d="M1.6 5.6Q6 1 10.4 2.4Q14.2 4.6 11.8 9.2L5.2 16.4" fill="none" stroke="#a8a8a8" stroke-width="1.2"/><path d="M1.6 1.4V5.6H5.8" fill="none" stroke="#a8a8a8" stroke-width="1.2"/></svg>
<div class="a" style="left:484px;top:115px;width:1px;height:19px;background:#c8c6c4"></div>
<svg class="a" style="left:494px;top:121px;z-index:6" width="13" height="8" viewBox="0 0 13 8"><path d="M0.8 0.8L6.5 6.8L12.2 0.8" fill="none" stroke="#333" stroke-width="1.2"/></svg>
<svg class="a" style="left:523px;top:116px;z-index:6" width="17" height="17" viewBox="0 0 17 17"><path d="M1.2 6.6V16.3H15.8V6.6M8.5 14.4V1.4M4.4 5.4L8.5 1.3L12.6 5.4" fill="none" stroke="#0f5fc7" stroke-width="1.3"/></svg>
<svg class="a" style="left:605px;top:116px;z-index:6" width="18" height="17" viewBox="0 0 18 17"><rect x="6.8" y="1.6" width="4.6" height="4" rx="0.6" fill="none" stroke="#0f5fc7" stroke-width="1.2"/><rect x="1.8" y="12.5" width="4.4" height="4" rx="0.6" fill="none" stroke="#0f5fc7" stroke-width="1.2"/><rect x="12.4" y="12.5" width="4.4" height="4" rx="0.6" fill="none" stroke="#0f5fc7" stroke-width="1.2"/><path d="M9.1 5.6V8.8M4 12.5V8.8H14.6V12.5" fill="none" stroke="#0f5fc7" stroke-width="1.2"/></svg>
<div class="a" style="left:709px;top:111px;width:1px;height:25px;background:#c8c6c4"></div>
<div class="a" style="left:798px;top:113px;width:180px;height:23px;border:1px solid #8a8886;background:#fff"></div>
<svg class="a" style="left:808px;top:118px;z-index:6" width="14" height="14" viewBox="0 0 14 14"><circle cx="7" cy="7" r="7" fill="#3d9a22"/><path d="M3.5 7.2L6 9.6L10.5 4.8" fill="none" stroke="#fff" stroke-width="1.7"/></svg>
<svg class="a" style="left:958px;top:121px;z-index:6" width="13" height="8" viewBox="0 0 13 8"><path d="M0.6 0.6L6.5 6.6L12.4 0.6" fill="none" stroke="#605e5c" stroke-width="1.1"/></svg>
<div class="a" style="left:1081px;top:113px;width:130px;height:23px;border:1px solid #8a8886;background:#fff"></div>
<svg class="a" style="left:1191px;top:121px;z-index:6" width="13" height="8" viewBox="0 0 13 8"><path d="M0.6 0.6L6.5 6.6L12.4 0.6" fill="none" stroke="#605e5c" stroke-width="1.1"/></svg>
<div class="a" style="left:404px;top:143px;width:821px;height:18px;background:#f4f4f4"></div>
<div class="a" style="left:404px;top:233px;width:1px;height:108px;background:#d3d3d3"></div>
<div class="a" style="left:404px;top:431px;width:1px;height:36px;background:#d3d3d3"></div>
<div class="a" style="left:418px;top:431px;width:1px;height:18px;background:#d3d3d3"></div>
<div class="a" style="left:431px;top:431px;width:1px;height:18px;background:#d3d3d3"></div>
<div class="a" style="left:444px;top:431px;width:1px;height:18px;background:#d3d3d3"></div>
<div class="a" style="left:346px;top:567px;width:879px;height:1px;background:#d6d6d6"></div>
<div class="a" style="left:362.5px;top:601px;width:48px;height:2px;background:#0f6cc8"></div>
<div class="a" style="left:346px;top:603px;width:879px;height:1px;background:#d6d6d6"></div>
<svg class="a" style="left:1207px;top:581px;z-index:6" width="16" height="9" viewBox="0 0 16 9"><path d="M0.6 8.4L8 1L15.4 8.4" fill="none" stroke="#333" stroke-width="1.2"/></svg>
<div class="a" style="left:410px;top:610px;width:207px;height:24px;border:1px solid #8a8886;border-radius:12px;background:#fff"></div>
<div class="a" style="left:412px;top:612px;width:101px;height:20px;border-radius:10px;background:#0b6acd"></div>
<svg class="a" style="left:656px;top:616px;z-index:6" width="17" height="10" viewBox="0 0 17 10"><path d="M0.8 0V9M0.8 4.5H16M12 1L16 4.5L12 8" fill="none" stroke="#1565c0" stroke-width="1.2"/></svg>
<svg class="a" style="left:767px;top:617px;z-index:6" width="12" height="7" viewBox="0 0 12 7"><path d="M0.6 0.6L6 6.2L11.4 0.6" fill="none" stroke="#333" stroke-width="1.1"/></svg>
<div class="a" style="left:346px;top:640px;width:879px;height:1px;background:#d6d6d6"></div>
<div class="a" style="left:364px;top:652px;width:851px;height:23px;border:1px solid #8a8886;border-radius:1px;background:#fff"></div>
<svg class="a" style="left:372px;top:656px;z-index:6" width="14" height="14" viewBox="0 0 14 14"><circle cx="8.8" cy="5" r="4.2" fill="none" stroke="#323130" stroke-width="1.2"/><path d="M5.8 8L1 12.8" stroke="#323130" stroke-width="1.3"/></svg>
<div class="a" style="left:364px;top:721px;width:844px;height:1px;background:#d8dee6"></div>
<div class="a" style="left:364px;top:754px;width:844px;height:1px;background:#d8dee6"></div>
<div class="a" style="left:364px;top:787px;width:844px;height:1px;background:#d8dee6"></div>
<div class="a" style="left:364px;top:820px;width:844px;height:1px;background:#d8dee6"></div>
<div class="a" style="left:364px;top:853px;width:844px;height:1px;background:#d8dee6"></div>
<div class="a" style="left:364px;top:886px;width:844px;height:1px;background:#d8dee6"></div>
<div class="a" style="left:364px;top:919px;width:844px;height:1px;background:#d8dee6"></div>
<div class="a" style="left:1208px;top:677px;width:7px;height:265px;background:#d9d9d9"></div>
<div class="a" style="left:355px;top:682px;width:135px;height:241px;border:3px solid #fa1b40;border-bottom-color:#ec1414;z-index:8"></div>
<div class="a" style="left:1px;top:3px;width:1225px;height:939px;border:1px solid #767676;z-index:40"></div>
<div class="a" style="left:0px;top:40px;width:1px;height:902px;background:#ededed;z-index:41"></div>
<div class="a" style="left:1226px;top:40px;width:1px;height:902px;background:#fff;z-index:41"></div>
<div class="a" id="t0" style="left:14px;top:10.00px;font-family:'Liberation Sans',sans-serif;font-size:14.5px;line-height:20px;color:#fff;font-weight:bold;font-style:normal;z-index:5;transform:scaleX(0.9951);transform-origin:0 0;">Microsoft Azure</div>
<div class="a" id="t1" style="left:150px;top:10.00px;font-family:'Liberation Sans',sans-serif;font-size:14px;line-height:20px;color:#fff;font-weight:normal;font-style:normal;z-index:5;-webkit-text-stroke:0.15px #fff;transform:scaleX(0.9681);transform-origin:0 0;">Synapse Analytics</div>
<div class="a" id="t2" style="left:289px;top:10.00px;font-family:'Liberation Sans',sans-serif;font-size:14px;line-height:20px;color:#fff;font-weight:normal;font-style:normal;z-index:5;-webkit-text-stroke:0.15px #fff;transform:scaleX(0.9606);transform-origin:0 0;">wsazuresynapseanalytics</div>
<div class="a" id="t3" style="left:642px;top:10.00px;font-family:'Liberation Sans',sans-serif;font-size:13.5px;line-height:20px;color:#173f6e;font-weight:normal;font-style:italic;z-index:5;-webkit-text-stroke:0.2px #173f6e;transform:scaleX(0.9167);transform-origin:0 0;">Search resources</div>
<div class="a" id="t4" style="left:95px;top:48.00px;font-family:'Liberation Sans',sans-serif;font-size:13.5px;line-height:20px;color:#fff;font-weight:normal;font-style:normal;z-index:5;-webkit-text-stroke:0.15px #fff;transform:scaleX(0.9424);transform-origin:0 0;">Publish all</div>
<div class="a" id="t5" style="left:164.5px;top:47.00px;font-family:'Liberation Sans',sans-serif;font-size:11px;line-height:20px;color:#1f1f1f;font-weight:normal;font-style:normal;z-index:5;-webkit-text-stroke:0.2px #1f1f1f;">1</div>
<div class="a" id="t6" style="left:219px;top:48.00px;font-family:'Liberation Sans',sans-serif;font-size:13.5px;line-height:20px;color:#201f1e;font-weight:normal;font-style:normal;z-index:5;-webkit-text-stroke:0.2px #201f1e;transform:scaleX(0.9608);transform-origin:0 0;">Validate all</div>
<div class="a" id="t7" style="left:323px;top:48.00px;font-family:'Liberation Sans',sans-serif;font-size:13.5px;line-height:20px;color:#201f1e;font-weight:normal;font-style:normal;z-index:5;-webkit-text-stroke:0.2px #201f1e;transform:scaleX(0.8883);transform-origin:0 0;">Refresh</div>
<div class="a" id="t8" style="left:406px;top:48.00px;font-family:'Liberation Sans',sans-serif;font-size:13.5px;line-height:20px;color:#201f1e;font-weight:normal;font-style:normal;z-index:5;-webkit-text-stroke:0.2px #201f1e;transform:scaleX(0.9281);transform-origin:0 0;">Discard all</div>
<div class="a" id="t9" style="left:60px;top:88.00px;font-family:'Liberation Sans',sans-serif;font-size:17.5px;line-height:20px;color:#000;font-weight:bold;font-style:normal;z-index:5;transform:scaleX(0.9885);transform-origin:0 0;">Data</div>
<div class="a" id="t10" style="left:89.5px;top:122.00px;font-family:'Liberation Sans',sans-serif;font-size:14px;line-height:20px;color:#201f1e;font-weight:normal;font-style:normal;z-index:5;-webkit-text-stroke:0.3px #201f1e;transform:scaleX(0.9960);transform-origin:0 0;">Workspace</div>
<div class="a" id="t11" style="left:238px;top:122.00px;font-family:'Liberation Sans',sans-serif;font-size:14px;line-height:20px;color:#201f1e;font-weight:normal;font-style:normal;z-index:5;-webkit-text-stroke:0.2px #201f1e;transform:scaleX(0.9572);transform-origin:0 0;">Linked</div>
<div class="a" id="t12" style="left:88px;top:161.00px;font-family:'Liberation Sans',sans-serif;font-size:13.5px;line-height:20px;color:#605e5c;font-weight:normal;font-style:italic;z-index:5;-webkit-text-stroke:0.2px #605e5c;transform:scaleX(0.9424);transform-origin:0 0;">Filter resources by name</div>
<div class="a" id="t13" style="left:85px;top:194.00px;font-family:'Liberation Sans',sans-serif;font-size:13.5px;line-height:20px;color:#201f1e;font-weight:normal;font-style:normal;z-index:5;-webkit-text-stroke:0.55px #201f1e;transform:scaleX(1.0148);transform-origin:0 0;">Databases</div>
<div class="a" id="t14" style="left:309.5px;top:194.00px;font-family:'Liberation Sans',sans-serif;font-size:13px;line-height:20px;color:#201f1e;font-weight:normal;font-style:normal;z-index:5;-webkit-text-stroke:0.55px #201f1e;">8</div>
<div class="a" id="t15" style="left:109.0px;top:228.00px;font-family:'Liberation Sans',sans-serif;font-size:13.5px;line-height:20px;color:#201f1e;font-weight:normal;font-style:normal;z-index:5;-webkit-text-stroke:0.55px #201f1e;transform:scaleX(0.9148);transform-origin:0 0;">NYCTaxi_Pool (SQL)</div>
<div class="a" id="t16" style="left:137.0px;top:260.00px;font-family:'Liberation Sans',sans-serif;font-size:13.5px;line-height:20px;color:#201f1e;font-weight:normal;font-style:normal;z-index:5;-webkit-text-stroke:0.55px #201f1e;transform:scaleX(0.9480);transform-origin:0 0;">Tables</div>
<div class="a" id="t17" style="left:149.0px;top:292.00px;font-family:'Liberation Sans',sans-serif;font-size:13.5px;line-height:20px;color:#201f1e;font-weight:normal;font-style:normal;z-index:5;-webkit-text-stroke:0.55px #201f1e;transform:scaleX(0.9691);transform-origin:0 0;">dbo.aml_models</div>
<div class="a" id="t18" style="left:149.0px;top:324.00px;font-family:'Liberation Sans',sans-serif;font-size:13.5px;line-height:20px;color:#201f1e;font-weight:normal;font-style:normal;z-index:5;-webkit-text-stroke:0.55px #201f1e;transform:scaleX(1.0114);transform-origin:0 0;">dbo.modeldeploy</div>
<div class="a" id="t19" style="left:149.0px;top:356.00px;font-family:'Liberation Sans',sans-serif;font-size:13.5px;line-height:20px;color:#201f1e;font-weight:normal;font-style:normal;z-index:5;-webkit-text-stroke:0.55px #201f1e;">dbo.Models</div>
<div class="a" id="t20" style="left:149.0px;top:388.00px;font-family:'Liberation Sans',sans-serif;font-size:13.5px;line-height:20px;color:#201f1e;font-weight:normal;font-style:normal;z-index:5;-webkit-text-stroke:0.55px #201f1e;transform:scaleX(0.9629);transform-origin:0 0;">dbo.nyc_taxi</div>
<div class="a" id="t21" style="left:177.0px;top:420.00px;font-family:'Liberation Sans',sans-serif;font-size:13.5px;line-height:20px;color:#201f1e;font-weight:normal;font-style:normal;z-index:5;-webkit-text-stroke:0.55px #201f1e;transform:scaleX(0.9572);transform-origin:0 0;">Columns</div>
<div class="a" id="t22" style="left:149.0px;top:452.00px;font-family:'Liberation Sans',sans-serif;font-size:13.5px;line-height:20px;color:#201f1e;font-weight:normal;font-style:normal;z-index:5;-webkit-text-stroke:0.55px #201f1e;transform:scaleX(0.9957);transform-origin:0 0;">dbo.nyctaxi</div>
<div class="a" id="t23" style="left:149.0px;top:484.00px;font-family:'Liberation Sans',sans-serif;font-size:13.5px;line-height:20px;color:#201f1e;font-weight:normal;font-style:normal;z-index:5;-webkit-text-stroke:0.55px #201f1e;transform:scaleX(0.9750);transform-origin:0 0;">dbo.testload1029</div>
<div class="a" id="t24" style="left:149.0px;top:516.00px;font-family:'Liberation Sans',sans-serif;font-size:13.5px;line-height:20px;color:#201f1e;font-weight:normal;font-style:normal;z-index:5;-webkit-text-stroke:0.55px #201f1e;transform:scaleX(0.9860);transform-origin:0 0;">dbo.Trips</div>
<div class="a" id="t25" style="left:137.0px;top:548.00px;font-family:'Liberation Sans',sans-serif;font-size:13.5px;line-height:20px;color:#201f1e;font-weight:normal;font-style:normal;z-index:5;-webkit-text-stroke:0.55px #201f1e;transform:scaleX(0.9629);transform-origin:0 0;">External tables</div>
<div class="a" id="t26" style="left:137.0px;top:580.00px;font-family:'Liberation Sans',sans-serif;font-size:13.5px;line-height:20px;color:#201f1e;font-weight:normal;font-style:normal;z-index:5;-webkit-text-stroke:0.55px #201f1e;transform:scaleX(0.9506);transform-origin:0 0;">External resources</div>
<div class="a" id="t27" style="left:137.0px;top:612.00px;font-family:'Liberation Sans',sans-serif;font-size:13.5px;line-height:20px;color:#201f1e;font-weight:normal;font-style:normal;z-index:5;-webkit-text-stroke:0.55px #201f1e;transform:scaleX(0.9502);transform-origin:0 0;">Views</div>
<div class="a" id="t28" style="left:137.0px;top:644.00px;font-family:'Liberation Sans',sans-serif;font-size:13.5px;line-height:20px;color:#201f1e;font-weight:normal;font-style:normal;z-index:5;-webkit-text-stroke:0.55px #201f1e;transform:scaleX(1.0151);transform-origin:0 0;">Programmability</div>
<div class="a" id="t29" style="left:137.0px;top:676.00px;font-family:'Liberation Sans',sans-serif;font-size:13.5px;line-height:20px;color:#201f1e;font-weight:normal;font-style:normal;z-index:5;-webkit-text-stroke:0.55px #201f1e;transform:scaleX(0.9062);transform-origin:0 0;">Schemas</div>
<div class="a" id="t30" style="left:137.0px;top:708.00px;font-family:'Liberation Sans',sans-serif;font-size:13.5px;line-height:20px;color:#201f1e;font-weight:normal;font-style:normal;z-index:5;-webkit-text-stroke:0.55px #201f1e;transform:scaleX(0.9635);transform-origin:0 0;">Security</div>
<div class="a" id="t31" style="left:109.0px;top:740.00px;font-family:'Liberation Sans',sans-serif;font-size:13.5px;line-height:20px;color:#201f1e;font-weight:normal;font-style:normal;z-index:5;-webkit-text-stroke:0.55px #201f1e;transform:scaleX(0.9285);transform-origin:0 0;">Predict_Pool (SQL)</div>
<div class="a" id="t32" style="left:109.0px;top:772.00px;font-family:'Liberation Sans',sans-serif;font-size:13.5px;line-height:20px;color:#201f1e;font-weight:normal;font-style:normal;z-index:5;-webkit-text-stroke:0.55px #201f1e;transform:scaleX(0.9351);transform-origin:0 0;">Streaming_Pool (SQL)</div>
<div class="a" id="t33" style="left:109.0px;top:804.00px;font-family:'Liberation Sans',sans-serif;font-size:13.5px;line-height:20px;color:#201f1e;font-weight:normal;font-style:normal;z-index:5;-webkit-text-stroke:0.55px #201f1e;transform:scaleX(0.9273);transform-origin:0 0;">WWI_Pool (SQL)</div>
<div class="a" id="t34" style="left:109.0px;top:836.00px;font-family:'Liberation Sans',sans-serif;font-size:13.5px;line-height:20px;color:#201f1e;font-weight:normal;font-style:normal;z-index:5;-webkit-text-stroke:0.55px #201f1e;transform:scaleX(0.9091);transform-origin:0 0;">NYT2020 (SQL)</div>
<div class="a" id="t35" style="left:109.0px;top:868.00px;font-family:'Liberation Sans',sans-serif;font-size:13.5px;line-height:20px;color:#201f1e;font-weight:normal;font-style:normal;z-index:5;-webkit-text-stroke:0.55px #201f1e;transform:scaleX(0.8975);transform-origin:0 0;">SQLServerlessDB (SQL)</div>
<div class="a" id="t36" style="left:109.0px;top:900.00px;font-family:'Liberation Sans',sans-serif;font-size:13.5px;line-height:20px;color:#201f1e;font-weight:normal;font-style:normal;z-index:5;-webkit-text-stroke:0.55px #201f1e;transform:scaleX(0.9712);transform-origin:0 0;">default (Spark)</div>
<div class="a" id="t37" style="left:109.0px;top:932.00px;font-family:'Liberation Sans',sans-serif;font-size:13.5px;line-height:20px;color:#201f1e;font-weight:normal;font-style:normal;z-index:5;-webkit-text-stroke:0.55px #201f1e;transform:scaleX(0.9365);transform-origin:0 0;">surfacesalesdb (Spark)</div>
<div class="a" id="t38" style="left:377.8px;top:82.00px;font-family:'Liberation Sans',sans-serif;font-size:13.5px;line-height:20px;color:#201f1e;font-weight:normal;font-style:normal;z-index:5;-webkit-text-stroke:0.5px #201f1e;transform:scaleX(0.8674);transform-origin:0 0;">SQL script 3</div>
<div class="a" id="t39" style="left:383.5px;top:116.00px;font-family:'Liberation Sans',sans-serif;font-size:13.5px;line-height:20px;color:#201f1e;font-weight:normal;font-style:normal;z-index:5;-webkit-text-stroke:0.2px #201f1e;transform:scaleX(0.9085);transform-origin:0 0;">Run</div>
<div class="a" id="t40" style="left:445px;top:116.00px;font-family:'Liberation Sans',sans-serif;font-size:13.5px;line-height:20px;color:#a19f9d;font-weight:normal;font-style:normal;z-index:5;-webkit-text-stroke:0.2px #a19f9d;transform:scaleX(0.9603);transform-origin:0 0;">Undo</div>
<div class="a" id="t41" style="left:548px;top:116.00px;font-family:'Liberation Sans',sans-serif;font-size:13.5px;line-height:20px;color:#201f1e;font-weight:normal;font-style:normal;z-index:5;-webkit-text-stroke:0.2px #201f1e;transform:scaleX(0.9372);transform-origin:0 0;">Publish</div>
<div class="a" id="t42" style="left:629.5px;top:116.00px;font-family:'Liberation Sans',sans-serif;font-size:13.5px;line-height:20px;color:#201f1e;font-weight:normal;font-style:normal;z-index:5;-webkit-text-stroke:0.2px #201f1e;transform:scaleX(0.9539);transform-origin:0 0;">Query plan</div>
<div class="a" id="t43" style="left:726px;top:116.00px;font-family:'Liberation Sans',sans-serif;font-size:13.5px;line-height:20px;color:#201f1e;font-weight:normal;font-style:normal;z-index:5;-webkit-text-stroke:0.2px #201f1e;transform:scaleX(0.9878);transform-origin:0 0;">Connect to</div>
<div class="a" id="t44" style="left:831.5px;top:116.00px;font-family:'Liberation Sans',sans-serif;font-size:13.5px;line-height:20px;color:#201f1e;font-weight:normal;font-style:normal;z-index:5;-webkit-text-stroke:0.2px #201f1e;transform:scaleX(0.9018);transform-origin:0 0;">NYCTaxi_Pool</div>
<div class="a" id="t45" style="left:995px;top:116.00px;font-family:'Liberation Sans',sans-serif;font-size:13.5px;line-height:20px;color:#201f1e;font-weight:normal;font-style:normal;z-index:5;-webkit-text-stroke:0.2px #201f1e;transform:scaleX(0.9302);transform-origin:0 0;">Use database</div>
<div class="a" id="t46" style="left:1090px;top:116.00px;font-family:'Liberation Sans',sans-serif;font-size:13.5px;line-height:20px;color:#201f1e;font-weight:normal;font-style:normal;z-index:5;-webkit-text-stroke:0.2px #201f1e;transform:scaleX(0.8961);transform-origin:0 0;">NYCTaxi_Pool</div>
<div class="a" id="t47" style="left:371.5px;top:143.00px;font-family:'Liberation Sans',sans-serif;font-size:12.5px;line-height:20px;color:#0b216f;font-weight:normal;font-style:normal;z-index:5;-webkit-text-stroke:0.25px #0b216f;transform:scaleX(0.8629);transform-origin:0 0;">1</div>
<div class="a" id="t48" style="left:404px;top:145.00px;font-family:'Liberation Mono',monospace;font-size:12px;line-height:18px;color:#000;font-weight:normal;font-style:normal;z-index:5;"><span style="color:#0000ff">CREATE PROCEDURE</span><span style="color:#000"> dbo.test_nyctaxi_scoring112</span></div>
<div class="a" id="t49" style="left:371.5px;top:161.00px;font-family:'Liberation Sans',sans-serif;font-size:12.5px;line-height:20px;color:#237893;font-weight:normal;font-style:normal;z-index:5;-webkit-text-stroke:0.25px #237893;transform:scaleX(0.8629);transform-origin:0 0;">2</div>
<div class="a" id="t50" style="left:404px;top:163.00px;font-family:'Liberation Mono',monospace;font-size:12px;line-height:18px;color:#000;font-weight:normal;font-style:normal;z-index:5;"><span style="color:#0000ff">AS</span></div>
<div class="a" id="t51" style="left:371.5px;top:179.00px;font-family:'Liberation Sans',sans-serif;font-size:12.5px;line-height:20px;color:#237893;font-weight:normal;font-style:normal;z-index:5;-webkit-text-stroke:0.25px #237893;transform:scaleX(0.8629);transform-origin:0 0;">3</div>
<div class="a" id="t52" style="left:404px;top:181.00px;font-family:'Liberation Mono',monospace;font-size:12px;line-height:18px;color:#000;font-weight:normal;font-style:normal;z-index:5;"><span style="color:#0000ff">BEGIN</span></div>
<div class="a" id="t53" style="left:371.5px;top:197.00px;font-family:'Liberation Sans',sans-serif;font-size:12.5px;line-height:20px;color:#237893;font-weight:normal;font-style:normal;z-index:5;-webkit-text-stroke:0.25px #237893;transform:scaleX(0.8629);transform-origin:0 0;">4</div>
<div class="a" id="t54" style="left:371.5px;top:215.00px;font-family:'Liberation Sans',sans-serif;font-size:12.5px;line-height:20px;color:#237893;font-weight:normal;font-style:normal;z-index:5;-webkit-text-stroke:0.25px #237893;transform:scaleX(0.8629);transform-origin:0 0;">5</div>
<div class="a" id="t55" style="left:404px;top:217.00px;font-family:'Liberation Mono',monospace;font-size:12px;line-height:18px;color:#000;font-weight:normal;font-style:normal;z-index:5;"><span style="color:#0000ff">SELECT</span></div>
<div class="a" id="t56" style="left:371.5px;top:233.00px;font-family:'Liberation Sans',sans-serif;font-size:12.5px;line-height:20px;color:#237893;font-weight:normal;font-style:normal;z-index:5;-webkit-text-stroke:0.25px #237893;transform:scaleX(0.8629);transform-origin:0 0;">6</div>
<div class="a" id="t57" style="left:404px;top:235.00px;font-family:'Liberation Mono',monospace;font-size:12px;line-height:18px;color:#000;font-weight:normal;font-style:normal;z-index:5;"><span style="color:#000">    </span><span style="color:#0000ff">CAST</span><span style="color:#000">([fareAmount] </span><span style="color:#0000ff">AS</span><span style="color:#000"> [real]) </span><span style="color:#0000ff">AS</span><span style="color:#000"> [fareAmount],</span></div>
<div class="a" id="t58" style="left:371.5px;top:251.00px;font-family:'Liberation Sans',sans-serif;font-size:12.5px;line-height:20px;color:#237893;font-weight:normal;font-style:normal;z-index:5;-webkit-text-stroke:0.25px #237893;transform:scaleX(0.8629);transform-origin:0 0;">7</div>
<div class="a" id="t59" style="left:404px;top:253.00px;font-family:'Liberation Mono',monospace;font-size:12px;line-height:18px;color:#000;font-weight:normal;font-style:normal;z-index:5;"><span style="color:#000">    </span><span style="color:#0000ff">CAST</span><span style="color:#000">([paymentType] </span><span style="color:#0000ff">AS</span><span style="color:#000"> [bigint]) </span><span style="color:#0000ff">AS</span><span style="color:#000"> [paymentType],</span></div>
<div class="a" id="t60" style="left:371.5px;top:269.00px;font-family:'Liberation Sans',sans-serif;font-size:12.5px;line-height:20px;color:#237893;font-weight:normal;font-style:normal;z-index:5;-webkit-text-stroke:0.25px #237893;transform:scaleX(0.8629);transform-origin:0 0;">8</div>
<div class="a" id="t61" style="left:404px;top:271.00px;font-family:'Liberation Mono',monospace;font-size:12px;line-height:18px;color:#000;font-weight:normal;font-style:normal;z-index:5;"><span style="color:#000">    </span><span style="color:#0000ff">CAST</span><span style="color:#000">([passengerCount] </span><span style="color:#0000ff">AS</span><span style="color:#000"> [bigint]) </span><span style="color:#0000ff">AS</span><span style="color:#000"> [passengerCount],</span></div>
<div class="a" id="t62" style="left:371.5px;top:287.00px;font-family:'Liberation Sans',sans-serif;font-size:12.5px;line-height:20px;color:#237893;font-weight:normal;font-style:normal;z-index:5;-webkit-text-stroke:0.25px #237893;transform:scaleX(0.8629);transform-origin:0 0;">9</div>
<div class="a" id="t63" style="left:404px;top:289.00px;font-family:'Liberation Mono',monospace;font-size:12px;line-height:18px;color:#000;font-weight:normal;font-style:normal;z-index:5;"><span style="color:#000">    </span><span style="color:#0000ff">CAST</span><span style="color:#000">([tripDistance] </span><span style="color:#0000ff">AS</span><span style="color:#000"> [real]) </span><span style="color:#0000ff">AS</span><span style="color:#000"> [tripDistance],</span></div>
<div class="a" id="t64" style="left:366.0px;top:305.00px;font-family:'Liberation Sans',sans-serif;font-size:12.5px;line-height:20px;color:#237893;font-weight:normal;font-style:normal;z-index:5;-webkit-text-stroke:0.25px #237893;transform:scaleX(0.8270);transform-origin:0 0;">10</div>
<div class="a" id="t65" style="left:404px;top:307.00px;font-family:'Liberation Mono',monospace;font-size:12px;line-height:18px;color:#000;font-weight:normal;font-style:normal;z-index:5;"><span style="color:#000">    [tripTimeSecs],</span></div>
<div class="a" id="t66" style="left:366.0px;top:323.00px;font-family:'Liberation Sans',sans-serif;font-size:12.5px;line-height:20px;color:#237893;font-weight:normal;font-style:normal;z-index:5;-webkit-text-stroke:0.25px #237893;transform:scaleX(0.8857);transform-origin:0 0;">11</div>
<div class="a" id="t67" style="left:404px;top:325.00px;font-family:'Liberation Mono',monospace;font-size:12px;line-height:18px;color:#000;font-weight:normal;font-style:normal;z-index:5;"><span style="color:#000">    </span><span style="color:#0000ff">CAST</span><span style="color:#000">([pickupTimeBin] </span><span style="color:#0000ff">AS</span><span style="color:#000"> [varchar]) </span><span style="color:#0000ff">AS</span><span style="color:#000"> [pickupTimeBin]</span></div>
<div class="a" id="t68" style="left:366.0px;top:341.00px;font-family:'Liberation Sans',sans-serif;font-size:12.5px;line-height:20px;color:#237893;font-weight:normal;font-style:normal;z-index:5;-webkit-text-stroke:0.25px #237893;transform:scaleX(0.8270);transform-origin:0 0;">12</div>
<div class="a" id="t69" style="left:404px;top:343.00px;font-family:'Liberation Mono',monospace;font-size:12px;line-height:18px;color:#000;font-weight:normal;font-style:normal;z-index:5;"><span style="color:#0000ff">INTO</span><span style="color:#000"> [dbo].[#nyc_taxi]</span></div>
<div class="a" id="t70" style="left:366.0px;top:359.00px;font-family:'Liberation Sans',sans-serif;font-size:12.5px;line-height:20px;color:#237893;font-weight:normal;font-style:normal;z-index:5;-webkit-text-stroke:0.25px #237893;transform:scaleX(0.8270);transform-origin:0 0;">13</div>
<div class="a" id="t71" style="left:404px;top:361.00px;font-family:'Liberation Mono',monospace;font-size:12px;line-height:18px;color:#000;font-weight:normal;font-style:normal;z-index:5;"><span style="color:#0000ff">FROM</span><span style="color:#000"> [dbo].[nyc_taxi];</span></div>
<div class="a" id="t72" style="left:366.0px;top:377.00px;font-family:'Liberation Sans',sans-serif;font-size:12.5px;line-height:20px;color:#237893;font-weight:normal;font-style:normal;z-index:5;-webkit-text-stroke:0.25px #237893;transform:scaleX(0.8270);transform-origin:0 0;">14</div>
<div class="a" id="t73" style="left:366.0px;top:395.00px;font-family:'Liberation Sans',sans-serif;font-size:12.5px;line-height:20px;color:#237893;font-weight:normal;font-style:normal;z-index:5;-webkit-text-stroke:0.25px #237893;transform:scaleX(0.8270);transform-origin:0 0;">15</div>
<div class="a" id="t74" style="left:404px;top:397.00px;font-family:'Liberation Mono',monospace;font-size:12px;line-height:18px;color:#000;font-weight:normal;font-style:normal;z-index:5;"><span style="color:#0000ff">SELECT</span><span style="color:#000"> *</span></div>
<div class="a" id="t75" style="left:366.0px;top:413.00px;font-family:'Liberation Sans',sans-serif;font-size:12.5px;line-height:20px;color:#237893;font-weight:normal;font-style:normal;z-index:5;-webkit-text-stroke:0.25px #237893;transform:scaleX(0.8270);transform-origin:0 0;">16</div>
<div class="a" id="t76" style="left:404px;top:415.00px;font-family:'Liberation Mono',monospace;font-size:12px;line-height:18px;color:#000;font-weight:normal;font-style:normal;z-index:5;"><span style="color:#0000ff">FROM</span><span style="color:#000"> PREDICT (MODEL = (</span><span style="color:#0000ff">SELECT</span><span style="color:#000"> [model] </span><span style="color:#0000ff">FROM</span><span style="color:#000"> dbo.aml_models </span><span style="color:#0000ff">WHERE</span><span style="color:#000"> [ID] = </span><span style="color:#a31515">'nyc_taxi_tip_predict:1'</span><span style="color:#000">),</span></div>
<div class="a" id="t77" style="left:366.0px;top:431.00px;font-family:'Liberation Sans',sans-serif;font-size:12.5px;line-height:20px;color:#237893;font-weight:normal;font-style:normal;z-index:5;-webkit-text-stroke:0.25px #237893;transform:scaleX(0.8270);transform-origin:0 0;">17</div>
<div class="a" id="t78" style="left:404px;top:433.00px;font-family:'Liberation Mono',monospace;font-size:12px;line-height:18px;color:#000;font-weight:normal;font-style:normal;z-index:5;"><span style="color:#000">              </span><span style="color:#0000ff">DATA</span><span style="color:#000"> = [dbo].[#nyc_taxi]) </span><span style="color:#0000ff">WITH</span><span style="color:#000"> ([output_label] [bigint])</span></div>
<div class="a" id="t79" style="left:366.0px;top:449.00px;font-family:'Liberation Sans',sans-serif;font-size:12.5px;line-height:20px;color:#237893;font-weight:normal;font-style:normal;z-index:5;-webkit-text-stroke:0.25px #237893;transform:scaleX(0.8270);transform-origin:0 0;">18</div>
<div class="a" id="t80" style="left:366.0px;top:467.00px;font-family:'Liberation Sans',sans-serif;font-size:12.5px;line-height:20px;color:#237893;font-weight:normal;font-style:normal;z-index:5;-webkit-text-stroke:0.25px #237893;transform:scaleX(0.8270);transform-origin:0 0;">19</div>
<div class="a" id="t81" style="left:404px;top:469.00px;font-family:'Liberation Mono',monospace;font-size:12px;line-height:18px;color:#000;font-weight:normal;font-style:normal;z-index:5;"><span style="color:#0000ff">END</span></div>
<div class="a" id="t82" style="left:366.0px;top:485.00px;font-family:'Liberation Sans',sans-serif;font-size:12.5px;line-height:20px;color:#237893;font-weight:normal;font-style:normal;z-index:5;-webkit-text-stroke:0.25px #237893;transform:scaleX(0.8270);transform-origin:0 0;">20</div>
<div class="a" id="t83" style="left:404px;top:487.00px;font-family:'Liberation Mono',monospace;font-size:12px;line-height:18px;color:#000;font-weight:normal;font-style:normal;z-index:5;"><span style="color:#0000ff">GO</span></div>
<div class="a" id="t84" style="left:366.0px;top:503.00px;font-family:'Liberation Sans',sans-serif;font-size:12.5px;line-height:20px;color:#237893;font-weight:normal;font-style:normal;z-index:5;-webkit-text-stroke:0.25px #237893;transform:scaleX(0.8270);transform-origin:0 0;">21</div>
<div class="a" id="t85" style="left:366.0px;top:521.00px;font-family:'Liberation Sans',sans-serif;font-size:12.5px;line-height:20px;color:#237893;font-weight:normal;font-style:normal;z-index:5;-webkit-text-stroke:0.25px #237893;transform:scaleX(0.8270);transform-origin:0 0;">22</div>
<div class="a" id="t86" style="left:404px;top:523.00px;font-family:'Liberation Mono',monospace;font-size:12px;line-height:18px;color:#000;font-weight:normal;font-style:normal;z-index:5;"><span style="color:#0000ff">EXEC</span><span style="color:#000"> dbo.test_nyctaxi_scoring112</span></div>
<div class="a" id="t87" style="left:363.7px;top:576.00px;font-family:'Liberation Sans',sans-serif;font-size:14px;line-height:20px;color:#201f1e;font-weight:normal;font-style:normal;z-index:5;-webkit-text-stroke:0.5px #201f1e;transform:scaleX(0.9639);transform-origin:0 0;">Results</div>
<div class="a" id="t88" style="left:435px;top:576.00px;font-family:'Liberation Sans',sans-serif;font-size:14px;line-height:20px;color:#201f1e;font-weight:normal;font-style:normal;z-index:5;-webkit-text-stroke:0.2px #201f1e;transform:scaleX(0.9403);transform-origin:0 0;">Messages</div>
<div class="a" id="t89" style="left:362px;top:613.00px;font-family:'Liberation Sans',sans-serif;font-size:13.5px;line-height:20px;color:#201f1e;font-weight:normal;font-style:normal;z-index:5;-webkit-text-stroke:0.45px #201f1e;transform:scaleX(0.9645);transform-origin:0 0;">View</div>
<div class="a" id="t90" style="left:449px;top:612.00px;font-family:'Liberation Sans',sans-serif;font-size:13px;line-height:20px;color:#fff;font-weight:normal;font-style:normal;z-index:5;transform:scaleX(0.9170);transform-origin:0 0;">Table</div>
<div class="a" id="t91" style="left:551px;top:612.00px;font-family:'Liberation Sans',sans-serif;font-size:13px;line-height:20px;color:#1565c0;font-weight:normal;font-style:normal;z-index:5;-webkit-text-stroke:0.2px #1565c0;transform:scaleX(0.8963);transform-origin:0 0;">Chart</div>
<div class="a" id="t92" style="left:682px;top:613.00px;font-family:'Liberation Sans',sans-serif;font-size:13.5px;line-height:20px;color:#201f1e;font-weight:normal;font-style:normal;z-index:5;-webkit-text-stroke:0.2px #201f1e;transform:scaleX(0.9330);transform-origin:0 0;">Export results</div>
<div class="a" id="t93" style="left:392.5px;top:654.00px;font-family:'Liberation Sans',sans-serif;font-size:13.5px;line-height:20px;color:#605e5c;font-weight:normal;font-style:normal;z-index:5;-webkit-text-stroke:0.2px #605e5c;transform:scaleX(0.8882);transform-origin:0 0;">Search</div>
<div class="a" id="t94" style="left:376.5px;top:693.00px;font-family:'Liberation Sans',sans-serif;font-size:13.5px;line-height:20px;color:#201f1e;font-weight:normal;font-style:normal;z-index:5;-webkit-text-stroke:0.5px #201f1e;transform:scaleX(0.9861);transform-origin:0 0;">Output_label</div>
<div class="a" id="t95" style="left:500px;top:693.00px;font-family:'Liberation Sans',sans-serif;font-size:13.5px;line-height:20px;color:#201f1e;font-weight:normal;font-style:normal;z-index:5;-webkit-text-stroke:0.5px #201f1e;transform:scaleX(0.9758);transform-origin:0 0;">FareAmount</div>
<div class="a" id="t96" style="left:620px;top:693.00px;font-family:'Liberation Sans',sans-serif;font-size:13.5px;line-height:20px;color:#201f1e;font-weight:normal;font-style:normal;z-index:5;-webkit-text-stroke:0.5px #201f1e;transform:scaleX(0.9631);transform-origin:0 0;">PaymentType</div>
<div class="a" id="t97" style="left:740.5px;top:693.00px;font-family:'Liberation Sans',sans-serif;font-size:13.5px;line-height:20px;color:#201f1e;font-weight:normal;font-style:normal;z-index:5;-webkit-text-stroke:0.5px #201f1e;transform:scaleX(0.9445);transform-origin:0 0;">PassengerCount</div>
<div class="a" id="t98" style="left:860.5px;top:693.00px;font-family:'Liberation Sans',sans-serif;font-size:13.5px;line-height:20px;color:#201f1e;font-weight:normal;font-style:normal;z-index:5;-webkit-text-stroke:0.5px #201f1e;transform:scaleX(0.9697);transform-origin:0 0;">TripDistance</div>
<div class="a" id="t99" style="left:980.5px;top:693.00px;font-family:'Liberation Sans',sans-serif;font-size:13.5px;line-height:20px;color:#201f1e;font-weight:normal;font-style:normal;z-index:5;-webkit-text-stroke:0.5px #201f1e;transform:scaleX(0.9421);transform-origin:0 0;">TripTimeSecs</div>
<div class="a" id="t100" style="left:1100.5px;top:693.00px;font-family:'Liberation Sans',sans-serif;font-size:13.5px;line-height:20px;color:#201f1e;font-weight:normal;font-style:normal;z-index:5;-webkit-text-stroke:0.5px #201f1e;transform:scaleX(0.9717);transform-origin:0 0;">PickupTimeBin</div>
<div class="a" id="t101" style="left:376.5px;top:728.00px;font-family:'Liberation Sans',sans-serif;font-size:13px;line-height:20px;color:#201f1e;font-weight:normal;font-style:normal;z-index:5;-webkit-text-stroke:0.15px #201f1e;">1</div>
<div class="a" id="t102" style="left:500px;top:728.00px;font-family:'Liberation Sans',sans-serif;font-size:13px;line-height:20px;color:#201f1e;font-weight:normal;font-style:normal;z-index:5;-webkit-text-stroke:0.15px #201f1e;">5</div>
<div class="a" id="t103" style="left:620px;top:728.00px;font-family:'Liberation Sans',sans-serif;font-size:13px;line-height:20px;color:#201f1e;font-weight:normal;font-style:normal;z-index:5;-webkit-text-stroke:0.15px #201f1e;">1</div>
<div class="a" id="t104" style="left:740.5px;top:728.00px;font-family:'Liberation Sans',sans-serif;font-size:13px;line-height:20px;color:#201f1e;font-weight:normal;font-style:normal;z-index:5;-webkit-text-stroke:0.15px #201f1e;">1</div>
<div class="a" id="t105" style="left:860.5px;top:728.00px;font-family:'Liberation Sans',sans-serif;font-size:13px;line-height:20px;color:#201f1e;font-weight:normal;font-style:normal;z-index:5;-webkit-text-stroke:0.15px #201f1e;">0.7</div>
<div class="a" id="t106" style="left:980.5px;top:728.00px;font-family:'Liberation Sans',sans-serif;font-size:13px;line-height:20px;color:#201f1e;font-weight:normal;font-style:normal;z-index:5;-webkit-text-stroke:0.15px #201f1e;">235</div>
<div class="a" id="t107" style="left:1100.5px;top:728.00px;font-family:'Liberation Sans',sans-serif;font-size:13px;line-height:20px;color:#201f1e;font-weight:normal;font-style:normal;z-index:5;-webkit-text-stroke:0.15px #201f1e;">PMRush</div>
<div class="a" id="t108" style="left:376.5px;top:761.00px;font-family:'Liberation Sans',sans-serif;font-size:13px;line-height:20px;color:#201f1e;font-weight:normal;font-style:normal;z-index:5;-webkit-text-stroke:0.15px #201f1e;">1</div>
<div class="a" id="t109" style="left:500px;top:761.00px;font-family:'Liberation Sans',sans-serif;font-size:13px;line-height:20px;color:#201f1e;font-weight:normal;font-style:normal;z-index:5;-webkit-text-stroke:0.15px #201f1e;">6</div>
<div class="a" id="t110" style="left:620px;top:761.00px;font-family:'Liberation Sans',sans-serif;font-size:13px;line-height:20px;color:#201f1e;font-weight:normal;font-style:normal;z-index:5;-webkit-text-stroke:0.15px #201f1e;">1</div>
<div class="a" id="t111" style="left:740.5px;top:761.00px;font-family:'Liberation Sans',sans-serif;font-size:13px;line-height:20px;color:#201f1e;font-weight:normal;font-style:normal;z-index:5;-webkit-text-stroke:0.15px #201f1e;">1</div>
<div class="a" id="t112" style="left:860.5px;top:761.00px;font-family:'Liberation Sans',sans-serif;font-size:13px;line-height:20px;color:#201f1e;font-weight:normal;font-style:normal;z-index:5;-webkit-text-stroke:0.15px #201f1e;">1.06</div>
<div class="a" id="t113" style="left:980.5px;top:761.00px;font-family:'Liberation Sans',sans-serif;font-size:13px;line-height:20px;color:#201f1e;font-weight:normal;font-style:normal;z-index:5;-webkit-text-stroke:0.15px #201f1e;">357</div>
<div class="a" id="t114" style="left:1100.5px;top:761.00px;font-family:'Liberation Sans',sans-serif;font-size:13px;line-height:20px;color:#201f1e;font-weight:normal;font-style:normal;z-index:5;-webkit-text-stroke:0.15px #201f1e;">Afternoon</div>
<div class="a" id="t115" style="left:376.5px;top:794.00px;font-family:'Liberation Sans',sans-serif;font-size:13px;line-height:20px;color:#201f1e;font-weight:normal;font-style:normal;z-index:5;-webkit-text-stroke:0.15px #201f1e;">1</div>
<div class="a" id="t116" style="left:500px;top:794.00px;font-family:'Liberation Sans',sans-serif;font-size:13px;line-height:20px;color:#201f1e;font-weight:normal;font-style:normal;z-index:5;-webkit-text-stroke:0.15px #201f1e;">9</div>
<div class="a" id="t117" style="left:620px;top:794.00px;font-family:'Liberation Sans',sans-serif;font-size:13px;line-height:20px;color:#201f1e;font-weight:normal;font-style:normal;z-index:5;-webkit-text-stroke:0.15px #201f1e;">1</div>
<div class="a" id="t118" style="left:740.5px;top:794.00px;font-family:'Liberation Sans',sans-serif;font-size:13px;line-height:20px;color:#201f1e;font-weight:normal;font-style:normal;z-index:5;-webkit-text-stroke:0.15px #201f1e;">1</div>
<div class="a" id="t119" style="left:860.5px;top:794.00px;font-family:'Liberation Sans',sans-serif;font-size:13px;line-height:20px;color:#201f1e;font-weight:normal;font-style:normal;z-index:5;-webkit-text-stroke:0.15px #201f1e;">1.7</div>
<div class="a" id="t120" style="left:980.5px;top:794.00px;font-family:'Liberation Sans',sans-serif;font-size:13px;line-height:20px;color:#201f1e;font-weight:normal;font-style:normal;z-index:5;-webkit-text-stroke:0.15px #201f1e;">619</div>
<div class="a" id="t121" style="left:1100.5px;top:794.00px;font-family:'Liberation Sans',sans-serif;font-size:13px;line-height:20px;color:#201f1e;font-weight:normal;font-style:normal;z-index:5;-webkit-text-stroke:0.15px #201f1e;">Night</div>
<div class="a" id="t122" style="left:376.5px;top:827.00px;font-family:'Liberation Sans',sans-serif;font-size:13px;line-height:20px;color:#201f1e;font-weight:normal;font-style:normal;z-index:5;-webkit-text-stroke:0.15px #201f1e;">0</div>
<div class="a" id="t123" style="left:500px;top:827.00px;font-family:'Liberation Sans',sans-serif;font-size:13px;line-height:20px;color:#201f1e;font-weight:normal;font-style:normal;z-index:5;-webkit-text-stroke:0.15px #201f1e;">5.5</div>
<div class="a" id="t124" style="left:620px;top:827.00px;font-family:'Liberation Sans',sans-serif;font-size:13px;line-height:20px;color:#201f1e;font-weight:normal;font-style:normal;z-index:5;-webkit-text-stroke:0.15px #201f1e;">2</div>
<div class="a" id="t125" style="left:740.5px;top:827.00px;font-family:'Liberation Sans',sans-serif;font-size:13px;line-height:20px;color:#201f1e;font-weight:normal;font-style:normal;z-index:5;-webkit-text-stroke:0.15px #201f1e;">1</div>
<div class="a" id="t126" style="left:860.5px;top:827.00px;font-family:'Liberation Sans',sans-serif;font-size:13px;line-height:20px;color:#201f1e;font-weight:normal;font-style:normal;z-index:5;-webkit-text-stroke:0.15px #201f1e;">0.52</div>
<div class="a" id="t127" style="left:980.5px;top:827.00px;font-family:'Liberation Sans',sans-serif;font-size:13px;line-height:20px;color:#201f1e;font-weight:normal;font-style:normal;z-index:5;-webkit-text-stroke:0.15px #201f1e;">337</div>
<div class="a" id="t128" style="left:1100.5px;top:827.00px;font-family:'Liberation Sans',sans-serif;font-size:13px;line-height:20px;color:#201f1e;font-weight:normal;font-style:normal;z-index:5;-webkit-text-stroke:0.15px #201f1e;">AMRush</div>
<div class="a" id="t129" style="left:376.5px;top:860.00px;font-family:'Liberation Sans',sans-serif;font-size:13px;line-height:20px;color:#201f1e;font-weight:normal;font-style:normal;z-index:5;-webkit-text-stroke:0.15px #201f1e;">1</div>
<div class="a" id="t130" style="left:500px;top:860.00px;font-family:'Liberation Sans',sans-serif;font-size:13px;line-height:20px;color:#201f1e;font-weight:normal;font-style:normal;z-index:5;-webkit-text-stroke:0.15px #201f1e;">16.5</div>
<div class="a" id="t131" style="left:620px;top:860.00px;font-family:'Liberation Sans',sans-serif;font-size:13px;line-height:20px;color:#201f1e;font-weight:normal;font-style:normal;z-index:5;-webkit-text-stroke:0.15px #201f1e;">1</div>
<div class="a" id="t132" style="left:740.5px;top:860.00px;font-family:'Liberation Sans',sans-serif;font-size:13px;line-height:20px;color:#201f1e;font-weight:normal;font-style:normal;z-index:5;-webkit-text-stroke:0.15px #201f1e;">1</div>
<div class="a" id="t133" style="left:860.5px;top:860.00px;font-family:'Liberation Sans',sans-serif;font-size:13px;line-height:20px;color:#201f1e;font-weight:normal;font-style:normal;z-index:5;-webkit-text-stroke:0.15px #201f1e;">4.17</div>
<div class="a" id="t134" style="left:980.5px;top:860.00px;font-family:'Liberation Sans',sans-serif;font-size:13px;line-height:20px;color:#201f1e;font-weight:normal;font-style:normal;z-index:5;-webkit-text-stroke:0.15px #201f1e;">1186</div>
<div class="a" id="t135" style="left:1100.5px;top:860.00px;font-family:'Liberation Sans',sans-serif;font-size:13px;line-height:20px;color:#201f1e;font-weight:normal;font-style:normal;z-index:5;-webkit-text-stroke:0.15px #201f1e;">Night</div>
<div class="a" id="t136" style="left:376.5px;top:893.00px;font-family:'Liberation Sans',sans-serif;font-size:13px;line-height:20px;color:#201f1e;font-weight:normal;font-style:normal;z-index:5;-webkit-text-stroke:0.15px #201f1e;">0</div>
<div class="a" id="t137" style="left:500px;top:893.00px;font-family:'Liberation Sans',sans-serif;font-size:13px;line-height:20px;color:#201f1e;font-weight:normal;font-style:normal;z-index:5;-webkit-text-stroke:0.15px #201f1e;">10.5</div>
<div class="a" id="t138" style="left:620px;top:893.00px;font-family:'Liberation Sans',sans-serif;font-size:13px;line-height:20px;color:#201f1e;font-weight:normal;font-style:normal;z-index:5;-webkit-text-stroke:0.15px #201f1e;">2</div>
<div class="a" id="t139" style="left:740.5px;top:893.00px;font-family:'Liberation Sans',sans-serif;font-size:13px;line-height:20px;color:#201f1e;font-weight:normal;font-style:normal;z-index:5;-webkit-text-stroke:0.15px #201f1e;">1</div>
<div class="a" id="t140" style="left:860.5px;top:893.00px;font-family:'Liberation Sans',sans-serif;font-size:13px;line-height:20px;color:#201f1e;font-weight:normal;font-style:normal;z-index:5;-webkit-text-stroke:0.15px #201f1e;">3.1</div>
<div class="a" id="t141" style="left:980.5px;top:893.00px;font-family:'Liberation Sans',sans-serif;font-size:13px;line-height:20px;color:#201f1e;font-weight:normal;font-style:normal;z-index:5;-webkit-text-stroke:0.15px #201f1e;">547</div>
<div class="a" id="t142" style="left:1100.5px;top:893.00px;font-family:'Liberation Sans',sans-serif;font-size:13px;line-height:20px;color:#201f1e;font-weight:normal;font-style:normal;z-index:5;-webkit-text-stroke:0.15px #201f1e;">Night</div>
<div class="a" id="t143" style="left:376.5px;top:926.00px;font-family:'Liberation Sans',sans-serif;font-size:13px;line-height:20px;color:#201f1e;font-weight:normal;font-style:normal;z-index:5;-webkit-text-stroke:0.15px #201f1e;">0</div>
<div class="a" id="t144" style="left:500px;top:926.00px;font-family:'Liberation Sans',sans-serif;font-size:13px;line-height:20px;color:#201f1e;font-weight:normal;font-style:normal;z-index:5;-webkit-text-stroke:0.15px #201f1e;">5</div>
<div class="a" id="t145" style="left:620px;top:926.00px;font-family:'Liberation Sans',sans-serif;font-size:13px;line-height:20px;color:#201f1e;font-weight:normal;font-style:normal;z-index:5;-webkit-text-stroke:0.15px #201f1e;">2</div>
<div class="a" id="t146" style="left:740.5px;top:926.00px;font-family:'Liberation Sans',sans-serif;font-size:13px;line-height:20px;color:#201f1e;font-weight:normal;font-style:normal;z-index:5;-webkit-text-stroke:0.15px #201f1e;">1</div>
<div class="a" id="t147" style="left:860.5px;top:926.00px;font-family:'Liberation Sans',sans-serif;font-size:13px;line-height:20px;color:#201f1e;font-weight:normal;font-style:normal;z-index:5;-webkit-text-stroke:0.15px #201f1e;">0.8</div>
<div class="a" id="t148" style="left:980.5px;top:926.00px;font-family:'Liberation Sans',sans-serif;font-size:13px;line-height:20px;color:#201f1e;font-weight:normal;font-style:normal;z-index:5;-webkit-text-stroke:0.15px #201f1e;">265</div>
<div class="a" id="t149" style="left:1100.5px;top:926.00px;font-family:'Liberation Sans',sans-serif;font-size:13px;line-height:20px;color:#201f1e;font-weight:normal;font-style:normal;z-index:5;-webkit-text-stroke:0.15px #201f1e;">Afternoon</div>
</body></html>
